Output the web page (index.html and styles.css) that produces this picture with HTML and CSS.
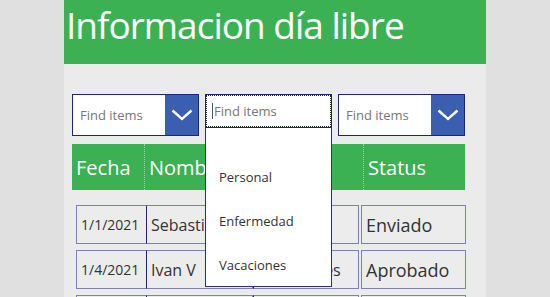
FILE: index.html
```html
<!DOCTYPE html>
<html lang="es">

<head>
    <meta charset="UTF-8">
    <meta name="viewport" content="width=device-width, initial-scale=1.0">
    <title>Informacion día libre</title>
    <link rel="stylesheet" href="styles.css">
</head>

<body>
    <div class="app">
        <div class="titulo">Informacion día libre</div>

        <div class="filtros">
            <div class="combo">
                <div class="combo-texto">Find items</div>
                <div class="combo-boton">
                    <svg width="22" height="12" viewBox="0 0 22 12">
                        <polyline points="1.5,1.5 11,10 20.5,1.5" fill="none" stroke="#ffffff" stroke-width="2.4" />
                    </svg>
                </div>
            </div>

            <div class="combo-abierto">
                <div class="buscar">
                    <div class="buscar-foco">
                        <span class="cursor"></span>Find items
                    </div>
                </div>
                <div class="lista">
                    <div class="opcion">Personal</div>
                    <div class="opcion">Enfermedad</div>
                    <div class="opcion">Vacaciones</div>
                </div>
            </div>

            <div class="combo">
                <div class="combo-texto">Find items</div>
                <div class="combo-boton">
                    <svg width="22" height="12" viewBox="0 0 22 12">
                        <polyline points="1.5,1.5 11,10 20.5,1.5" fill="none" stroke="#ffffff" stroke-width="2.4" />
                    </svg>
                </div>
            </div>
        </div>

        <div class="cabecera">
            <div class="col fecha">Fecha</div>
            <div class="col nombre">Nombre</div>
            <div class="col tipo">Tipo</div>
            <div class="col status">Status</div>
        </div>

        <div class="fila">
            <div class="celda fecha-c">1/1/2021</div>
            <div class="celda nombre-c">Sebastian</div>
            <div class="celda tipo-c">Personal</div>
            <div class="celda status-c">Enviado</div>
        </div>
        <div class="fila">
            <div class="celda fecha-c">1/4/2021</div>
            <div class="celda nombre-c">Ivan V</div>
            <div class="celda tipo-c">Vacaciones</div>
            <div class="celda status-c">Aprobado</div>
        </div>
        <div class="fila">
            <div class="celda fecha-c">1/8/2021</div>
            <div class="celda nombre-c">Maria</div>
            <div class="celda tipo-c">Enfermedad</div>
            <div class="celda status-c">Enviado</div>
        </div>
    </div>
</body>

</html>
```

FILE: styles.css
```css
* {
    box-sizing: border-box;
}

body {
    margin: 0;
    background-color: #e0e0e0;
    font-family: "Open Sans", "Noto Sans", sans-serif;
    overflow: hidden;
}

.app {
    width: 422px;
    height: 297px;
    margin: 0 auto;
    background-color: #ebebeb;
    overflow: hidden;
}

.titulo {
    height: 64px;
    background-color: #3bb153;
    color: #ffffff;
    font-size: 37px;
    letter-spacing: -1px;
    line-height: 50px;
    padding-left: 2px;
}

.filtros {
    display: flex;
    gap: 6px;
    padding: 30px 0 0 8px;
    height: 72px;
}

.combo {
    display: flex;
    width: 127px;
    height: 42px;
    border: 1px solid #1b2580;
    background-color: #ffffff;
}

.combo-texto {
    flex: 1;
    display: flex;
    align-items: center;
    padding-left: 7px;
    font-size: 13px;
    color: #777777;
}

.combo-boton {
    width: 33px;
    background-color: #3b5fb0;
    display: flex;
    align-items: center;
    justify-content: center;
}

.combo-abierto {
    position: relative;
    width: 127px;
}

.buscar {
    height: 34px;
    border: 1px solid #1b2580;
    background-color: #ffffff;
}

.buscar-foco {
    height: 100%;
    border: 1px dotted #222222;
    display: flex;
    align-items: center;
    padding-left: 5px;
    font-size: 13px;
    color: #777777;
}

.cursor {
    width: 1px;
    height: 16px;
    background-color: #555555;
    margin-right: 1px;
}

.lista {
    position: absolute;
    top: 34px;
    left: 0;
    width: 127px;
    height: 159px;
    background-color: #ffffff;
    border: 1px solid #2a3080;
    border-top: none;
    padding-top: 27px;
    z-index: 2;
}

.opcion {
    height: 44px;
    line-height: 44px;
    padding-left: 13px;
    font-size: 13px;
    color: #333333;
}

.cabecera {
    display: flex;
    height: 46px;
    margin: 8px 0 0 8px;
    width: 393px;
    background-color: #3bb153;
}

.col {
    display: flex;
    align-items: center;
    padding-left: 4px;
    color: #ffffff;
    font-size: 20px;
    border-right: 1px dotted rgba(255, 255, 255, 0.45);
}

.fecha {
    width: 73px;
}

.nombre {
    width: 108px;
}

.tipo {
    width: 111px;
}

.status {
    flex: 1;
    border-right: none;
}

.fila {
    display: flex;
    margin: 15px 0 -9px 12px;
    height: 39px;
}

.celda {
    display: flex;
    align-items: center;
    padding-left: 4px;
    background-color: #ececec;
    border: 1px solid #7b80b8;
    color: #333333;
    font-size: 16px;
    white-space: nowrap;
    overflow: hidden;
}

.fecha-c {
    width: 71px;
    font-size: 14px;
    border-right: 1px solid #1b2580;
}

.nombre-c {
    width: 106px;
    border-left: none;
}

.tipo-c {
    width: 106px;
    border-left: 1px solid #1b2580;
}

.status-c {
    width: 105px;
    margin-left: 2px;
    font-size: 18px;
}
```
